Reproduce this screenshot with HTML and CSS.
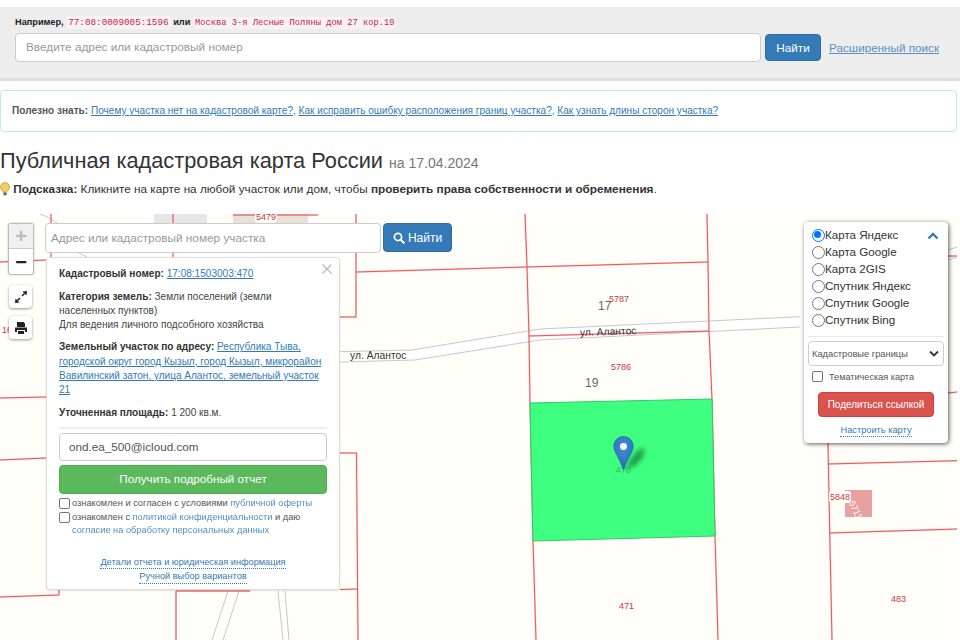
FILE: index.html
```html
<!DOCTYPE html>
<html lang="ru">
<head>
<meta charset="utf-8">
<title>Публичная кадастровая карта России</title>
<link rel="stylesheet" href="styles.css">
</head>
<body>
<header class="search-band">
  <p class="examples"><b>Например,</b> <code class="c1">77:08:0009005:1596</code> <b>или</b> <code class="c2">Москва 3-я Лесные Поляны дом 27 кор.19</code></p>
  <div class="search-row">
    <div class="input main-input">Введите адрес или кадастровый номер</div>
    <div class="btn btn-blue main-find">Найти</div>
    <a class="adv">Расширенный поиск</a>
  </div>
</header>
<div class="notice"><b>Полезно знать:</b> <a>Почему участка нет на кадастровой карте?</a>, <a>Как исправить ошибку расположения границ участка?</a>, <a>Как узнать длины сторон участка?</a></div>
<h1 class="title">Публичная кадастровая карта России <small>на 17.04.2024</small></h1>
<p class="hint">
  <svg class="bulb" viewBox="0 0 10 14" width="10" height="14"><path d="M5 .5a4.500 4.500 0 0 0-2.600 8.100c.5.5.7 1 .8 1.700h3.600c.1-.7.3-1.200.8-1.700A4.500 4.500 0 0 0 5 .5z" fill="#f5cd5b" stroke="#b99a3c" stroke-width=".8"/><rect x="3.300" y="10.600" width="3.400" height="2.600" rx=".8" fill="#666"/></svg>
  <b>Подсказка:</b> Кликните на карте на любой участок или дом, чтобы <b>проверить права собственности и обременения</b>.
</p>
<section class="map">
  <svg class="map-lines" viewBox="0 214 957 426" width="957" height="426">
    <defs>
      <g id="parcels">
        <path d="M51 214V262"/><path d="M173 214V257"/>
        <path d="M233 215H318"/>
        <path d="M0 262L46 260"/>
        <path d="M0 398L46 397"/><path d="M0 460L46 458"/>
        <path d="M0 597L59 595V590"/>
        <path d="M176 591H250"/><path d="M176 591V640"/>
        <path d="M340 317H356V214"/>
        <path d="M356 272L527 267L708 262"/>
        <path d="M525 214L527 267L529 336L530 403L533 541L536 640"/>
        <path d="M707 214L708 262L709 331L712 399L715 536L718 640"/>
        <path d="M529 336L709 331"/>
        <path d="M340 453H356.500L358 640"/>
        <path d="M340 589.500L357.500 589"/>
        <path d="M828 443L829 497L832 640"/>
        <path d="M828 464L957 460.700"/><path d="M830 533L957 529"/>
        <path d="M948 256H957"/><path d="M948 393L957 392"/>
      </g>
      <radialGradient id="pg" cx=".5" cy=".3" r=".8"><stop offset="0" stop-color="#3f8fd6"/><stop offset="1" stop-color="#2468ad"/></radialGradient>
      <filter id="bl" x="-50%" y="-50%" width="200%" height="200%"><feGaussianBlur stdDeviation="2.800"/></filter>
    </defs>
    <rect class="bg1" x="154" y="214" width="53" height="10"/>
    <rect class="bg2" x="233" y="214" width="75" height="10"/>
    <path class="road-bg" d="M340 351.700L412 350L540 329L800 316.700V327L540 340L415 360L340 362Z"/>
    <g class="road">
      <path d="M340 351.700L412 350L540 329L800 316.700"/>
      <path d="M340 362L415 360L540 340L800 327"/>
      <path d="M948 250L957 247"/><path d="M948 260L957 257"/>
      <path d="M228 591L212 640"/><path d="M239 591L223 640"/>
      <path d="M278 591L283 640"/><path d="M285 591L289 640"/>
      <path d="M40 214Q54 219 63 228"/><path d="M77 252L87 257"/>
    </g>
    <use href="#parcels" class="halo"/>
    <use href="#parcels" class="core"/>
    <polygon class="parcel-sel" points="530,403 712,399 715,536 533,541"/>
    <rect class="house" x="845" y="490" width="27" height="27"/>
  </svg>
  <span class="lbl r pill l1">5479</span>
  <span class="lbl g l3">17</span>
  <span class="lbl r l2">5787</span>
  <span class="lbl k l4">ул. Алантос</span>
  <span class="lbl k l5">ул. Алантос</span>
  <span class="lbl r l6">5786</span>
  <span class="lbl g l7">19</span>
  <span class="lbl w l9">5711</span>
  <span class="lbl r pill l8">5848</span>
  <span class="lbl r l10">471</span>
  <span class="lbl r l11">483</span>
  <span class="lbl r l12">16</span>
  <span class="lbl s l13">470</span>

  <svg class="pin" viewBox="0 0 46 36" width="46" height="36">
    <path d="M11 33L22 17L31 11L31 20L22 30Z" fill="#0a4a28" opacity=".55" filter="url(#bl)"/>
    <path d="M10.500.6C5 .6.8 4.800.8 10.300c0 5.800 5 10 9.700 23.500C15.200 20.300 20.200 16.100 20.200 10.300 20.200 4.800 16 .6 10.500.6z" fill="url(#pg)" stroke="#2a6ca8" stroke-width=".8"/>
    <circle cx="10.500" cy="10.500" r="3.400" fill="#fff"/>
  </svg>

  <div class="zoom">
    <div class="zoom-btn zoom-in">+</div>
    <div class="zoom-btn zoom-out">−</div>
  </div>
  <div class="tool tool-full">
    <svg viewBox="0 0 14 14" width="14" height="14"><path d="M13 1L8.500 1.500L12.500 5.500ZM1 13L5.500 12.500L1.500 8.500Z" fill="#222"/><path d="M10.500 3.500L8 6M3.500 10.500L6 8" stroke="#222" stroke-width="1.500"/></svg>
  </div>
  <div class="tool tool-print">
    <svg viewBox="0 0 14 14" width="14" height="14"><path d="M3 1h6.500L11 2.500V6H3zM1 6.500h12V11h-2V9H3v2H1zM4 10h6v3H4z" fill="#222"/></svg>
  </div>

  <div class="map-search">
    <div class="input map-input">Адрес или кадастровый номер участка</div>
    <div class="btn btn-blue map-find">
      <svg viewBox="0 0 14 14" width="12" height="12"><circle cx="5.800" cy="5.800" r="4.200" fill="none" stroke="#fff" stroke-width="2"/><path d="M9 9l3.600 3.600" stroke="#fff" stroke-width="2.400" stroke-linecap="round"/></svg>
      Найти
    </div>
  </div>

  <aside class="popup">
    <svg class="close" viewBox="0 0 10 10" width="10" height="10"><path d="M.5.5l9 9M9.500.5l-9 9" stroke="#bbb" stroke-width="1.300"/></svg>
    <p class="row"><b>Кадастровый номер:</b> <a>17:08:1503003:470</a></p>
    <p class="row"><b>Категория земель:</b> Земли поселений (земли населенных пунктов)<br>Для ведения личного подсобного хозяйства</p>
    <p class="row"><b>Земельный участок по адресу:</b> <a>Республика Тыва, городской округ город Кызыл, город Кызыл, микрорайон Вавилинский затон, улица Алантос, земельный участок 21</a></p>
    <p class="row row-area"><b>Уточненная площадь:</b> 1 200 кв.м.</p>
    <hr class="rule">
    <div class="input email">ond.ea_500@icloud.com</div>
    <div class="btn btn-green">Получить подробный отчет</div>
    <div class="check check-first"><span class="box"></span><span>ознакомлен и согласен с условиями <em>публичной оферты</em></span></div>
    <div class="check"><span class="box"></span><span>ознакомлен с <em>политикой конфиденциальности</em> и даю <em>согласие на обработку персональных данных</em></span></div>
    <div class="pop-links"><a>Детали отчета и юридическая информация</a><a>Ручной выбор вариантов</a></div>
  </aside>

  <aside class="layers">
    <svg class="chev" viewBox="0 0 12 8" width="12" height="8"><path d="M1.500 6.500L6 2l4.500 4.500" fill="none" stroke="#337ab7" stroke-width="2.400"/></svg>
    <div class="radio on">Карта Яндекс</div>
    <div class="radio">Карта Google</div>
    <div class="radio">Карта 2GIS</div>
    <div class="radio">Спутник Яндекс</div>
    <div class="radio">Спутник Google</div>
    <div class="radio">Спутник Bing</div>
    <hr class="rule2">
    <div class="select">Кадастровые границы
      <svg viewBox="0 0 10 7" width="10" height="7"><path d="M1 1.500l4 4 4-4" fill="none" stroke="#333" stroke-width="1.800"/></svg>
    </div>
    <div class="theme"><span class="box"></span>Тематическая карта</div>
    <div class="btn btn-red">Поделиться ссылкой</div>
    <a class="cfg">Настроить карту</a>
  </aside>
</section>
</body>
</html>
```
FILE: styles.css
```css
* { box-sizing: border-box; }
html, body { margin: 0; padding: 0; }
body { width: 960px; height: 640px; overflow: hidden; background: #fff; font-family: "Liberation Sans", Arial, sans-serif; color: #333; font-size: 12px; }
a { color: #337ab7; text-decoration: underline; }
p { margin: 0; }

.search-band { margin-top: 7px; height: 74px; background: #ededed; border-bottom: 3px solid #ddd; padding: 8px 15px 0; }
.examples { font-size: 9.200px; height: 18px; line-height: 14px; white-space: nowrap; color: #222; }
code { font-family: "Liberation Mono", monospace; color: #c7254e; background: #f9f2f4; padding: 1px 2px; border-radius: 3px; }
.c1 { font-size: 9.300px; }
.c2 { font-size: 8.750px; }
.search-row { display: flex; align-items: center; height: 29px; }
.input { background: #fff; border: 1px solid #ccc; border-radius: 4px; color: #999; }
.main-input { width: 746px; height: 29px; line-height: 27px; padding-left: 10px; font-size: 11.800px; }
.btn { border-radius: 4px; color: #fff; display: flex; align-items: center; justify-content: center; }
.btn-blue { background: #337ab7; border: 1px solid #2e6da4; }
.main-find { width: 56px; height: 27px; margin-left: 4px; font-size: 11.800px; }
.adv { margin-left: 8px; font-size: 11.700px; color: #5b8fc5; }

.notice { margin-top: 9px; height: 42px; width: 957px; border: 1px solid #bce8f1; border-radius: 4px; line-height: 39px; padding-left: 11px; font-size: 10.070px; color: #31708f; }
.notice b { color: #555; }
.title { margin: 16px 0 0; height: 26px; font-weight: 400; font-size: 21.770px; line-height: 26px; color: #333; white-space: nowrap; }
.title small { font-size: 14px; color: #777; }
.hint { margin-top: 6px; height: 18px; line-height: 18px; font-size: 11.750px; white-space: nowrap; color: #333; }
.bulb { vertical-align: -3px; }

.map { position: relative; margin-top: 16px; width: 957px; height: 426px; background: #fffef9; overflow: hidden; }
.map-lines { position: absolute; inset: 0; display: block; }
.road { fill: none; stroke: #c8c8c8; stroke-width: 1; }
.road-bg { fill: #fff; }
.halo { fill: none; stroke: #f4a9a9; stroke-width: 2; opacity: .45; }
.core { fill: none; stroke: #e8454d; stroke-width: .9; }
.bg1 { fill: #e6e6e6; }
.bg2 { fill: #e6e2d8; }
.parcel-sel { fill: #3fff81; stroke: #35c76a; stroke-width: 1; }
.house { fill: #e8a0a0; }

.lbl { position: absolute; white-space: nowrap; line-height: 12px; }
.lbl.r { color: #c8393f; font-size: 9px; }
.lbl.g { color: #666; font-size: 12px; }
.lbl.k { color: #333; font-size: 10.300px; }
.lbl.w { color: #fff; font-size: 9px; }
.lbl.s { color: #37b868; font-size: 9px; }
.pill { background: #fffef9; padding: 0 1px; border-radius: 3px; }
.l1 { left: 255px; top: -3px; }
.l2 { left: 609px; top: 79px; }
.l3 { left: 598px; top: 86px; }
.l4 { left: 580px; top: 112px; transform: rotate(-2deg); }
.l5 { left: 350px; top: 136px; }
.l6 { left: 611px; top: 147px; }
.l7 { left: 585px; top: 163px; }
.l8 { left: 829px; top: 277px; }
.l9 { left: 846px; top: 290px; transform: rotate(65deg); }
.l10 { left: 619px; top: 386px; }
.l11 { left: 891px; top: 379px; }
.l12 { left: 2px; top: 110px; }
.l13 { left: 616px; top: 250px; }

.pin { position: absolute; left: 613px; top: 222px; }

.zoom { position: absolute; left: 8px; top: 9px; width: 26px; border: 1px solid #bbb; border-radius: 3px; background: #fff; box-shadow: 0 0 2px rgba(0,0,0,.25); }
.zoom-btn { height: 25px; display: flex; align-items: center; justify-content: center; font-size: 20px; font-weight: 700; color: #222; line-height: 1; }
.zoom-in { background: #f0f0f0; color: #bbb; border-bottom: 1px solid #ccc; }
.tool { position: absolute; left: 9px; width: 23px; height: 23px; background: #fff; border-radius: 4px; box-shadow: 0 1px 3px rgba(0,0,0,.4); display: flex; align-items: center; justify-content: center; }
.tool-full { top: 71px; }
.tool-print { top: 102px; }

.map-search { position: absolute; left: 45px; top: 9px; display: flex; gap: 2px; }
.map-input { width: 336px; height: 30px; line-height: 28px; padding-left: 5px; font-size: 11.800px; }
.map-find { width: 69px; height: 29px; font-size: 12px; gap: 3px; }

.popup { position: absolute; left: 46px; top: 43px; width: 294px; height: 333px; background: #fff; border: 1px solid #ddd; border-radius: 4px; padding: 9px 12px 0; font-size: 10.050px; line-height: 14.200px; color: #444; box-shadow: 0 1px 2px rgba(0,0,0,.12); }
.popup .row { margin-bottom: 8.300px; }
.popup .row b { color: #333; }
.close { position: absolute; right: 7px; top: 6px; }
.popup .row-area { margin-bottom: 7.300px; }
.rule { border: 0; height: 2px; background: #eee; margin: 0 0 4px; }
.email { height: 28px; line-height: 26px; padding-left: 9px; font-size: 11.700px; color: #555; }
.btn-green { margin-top: 4px; height: 29px; background: #5cb85c; border: 1px solid #4cae4c; font-size: 11.700px; }
.check { display: flex; gap: 2px; font-size: 9.250px; line-height: 13.500px; color: #555; }
.check-first { margin-top: 3px; }
.check em { font-style: normal; color: #337ab7; opacity: .85; }
.box { flex: none; width: 11px; height: 11px; border: 1px solid #767676; border-radius: 2px; background: #fff; margin-top: 1px; }
.pop-links { margin-top: 18px; display: flex; flex-direction: column; align-items: center; gap: 1px; font-size: 9.200px; line-height: 12.500px; }
.pop-links a, .cfg { text-decoration: none; border-bottom: 1px dotted #337ab7; }

.layers { position: absolute; left: 804px; top: 8px; width: 144px; height: 221px; background: #fff; border-radius: 4px; box-shadow: 1px 1px 4px rgba(0,0,0,.65); padding: 4px 4px 0; font-size: 11.600px; color: #333; }
.chev { position: absolute; right: 9px; top: 10px; }
.radio { height: 17px; line-height: 17px; padding-left: 17px; position: relative; white-space: nowrap; }
.radio::before { content: ""; position: absolute; left: 4px; top: 3px; width: 11px; height: 11px; border: 1px solid #767676; border-radius: 50%; background: #fff; }
.radio.on::before { border-color: #0075ff; }
.radio.on::after { content: ""; position: absolute; left: 6px; top: 5px; width: 7px; height: 7px; border-radius: 50%; background: #0075ff; }
.rule2 { border: 0; height: 1px; background: #e8e8e8; margin: 8px 0 4px; }
.select { height: 25px; border: 1px solid #ccc; border-radius: 4px; padding: 0 4px 0 3px; display: flex; align-items: center; justify-content: space-between; font-size: 9.300px; color: #555; }
.theme { display: flex; align-items: center; gap: 6px; margin: 5px 0 0 4px; font-size: 9.150px; color: #555; }
.theme .box { margin: 0; }
.btn-red { margin: 10px auto 0; width: 116px; height: 25px; background: #d9534f; border: 1px solid #d43f3a; font-size: 10px; }
.cfg { display: table; margin: 8px auto 0; font-size: 9.250px; line-height: 11px; }
```
